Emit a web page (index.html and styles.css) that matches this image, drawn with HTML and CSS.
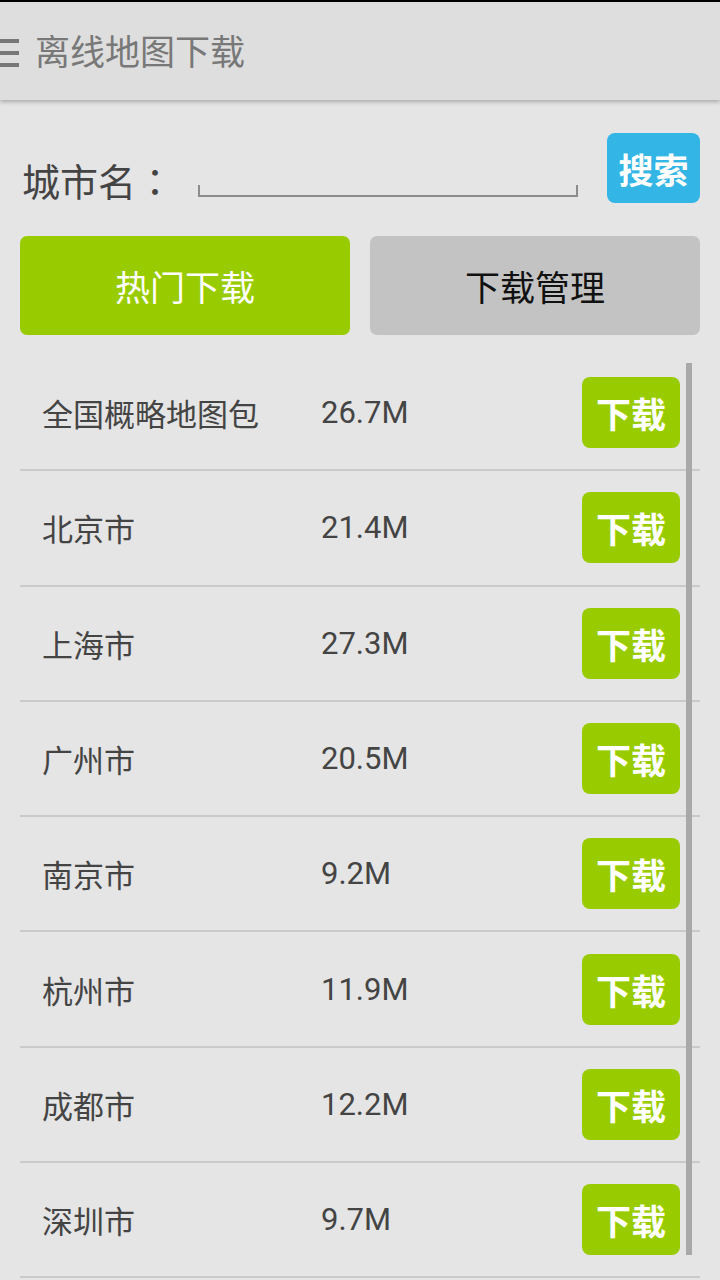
FILE: index.html
```html
<!DOCTYPE html>
<html lang="zh-CN">
  <head>
    <meta charset="UTF-8" />
    <meta name="viewport" content="width=device-width, initial-scale=1.0" />
    <title>离线地图下载</title>
    <link rel="stylesheet" href="styles.css">
  </head>
  <body>
    <div class="status"></div>
    <div class="header">
      <div class="menu-icon">
        <span></span>
        <span></span>
        <span></span>
      </div>
      <h1 class="title">离线地图下载</h1>
    </div>

    <div class="search-row">
      <label class="label" for="city">城市名<span class="colon" lang="zh-Hant">：</span></label>
      <div class="input"></div>
      <button class="search-btn">搜索</button>
    </div>

    <div class="tabs">
      <button class="tab tab-active">热门下载</button>
      <button class="tab">下载管理</button>
    </div>

    <div class="list-wrap">
      <ul class="list">
        <li class="row"><span class="name">全国概略地图包</span><span class="size">26.7M</span><button class="dl-btn">下载</button></li>
        <li class="row"><span class="name">北京市</span><span class="size">21.4M</span><button class="dl-btn">下载</button></li>
        <li class="row"><span class="name">上海市</span><span class="size">27.3M</span><button class="dl-btn">下载</button></li>
        <li class="row"><span class="name">广州市</span><span class="size">20.5M</span><button class="dl-btn">下载</button></li>
        <li class="row"><span class="name">南京市</span><span class="size">9.2M</span><button class="dl-btn">下载</button></li>
        <li class="row"><span class="name">杭州市</span><span class="size">11.9M</span><button class="dl-btn">下载</button></li>
        <li class="row"><span class="name">成都市</span><span class="size">12.2M</span><button class="dl-btn">下载</button></li>
        <li class="row"><span class="name">深圳市</span><span class="size">9.7M</span><button class="dl-btn">下载</button></li>
      </ul>
      <div class="scrollbar"></div>
    </div>
  </body>
</html>
```

FILE: styles.css
```css
/* Offline map download screen */
body {
  font-family: Roboto, "Noto Sans CJK SC", sans-serif;
  margin: 0;
  width: 720px;
  height: 1280px;
  overflow: hidden;
  background-color: #e5e5e5;
  color: #444;
}
.status {
  height: 2px;
  background-color: #000;
}
.header {
  height: 98px;
  box-sizing: border-box;
  padding-top: 4px;
  display: flex;
  align-items: center;
  background-color: #dedede;
  box-shadow: 0 2px 4px rgba(0, 0, 0, 0.25);
  position: relative;
}
.menu-icon {
  width: 19px;
  display: flex;
  flex-direction: column;
  gap: 8px;
  margin-right: 16px;
}
.menu-icon span {
  display: block;
  height: 4px;
  background-color: #777;
}
.title {
  margin: 0;
  font-size: 35px;
  font-weight: normal;
  color: #787878;
  line-height: 1;
}
.search-row {
  display: flex;
  align-items: flex-start;
  padding: 33px 20px 0 22px;
}
.label {
  font-size: 38px;
  line-height: 40px;
  margin-top: 27px;
  color: #444;
}
.colon {
  font-family: "Noto Sans CJK TC", sans-serif;
}
.input {
  width: 376px;
  height: 10px;
  margin-top: 52px;
  margin-left: 24px;
  border: 2px solid #8c8c8c;
  border-top: none;
}
.search-btn {
  margin-left: auto;
  width: 93px;
  height: 70px;
  border: none;
  border-radius: 8px;
  background-color: #33b5e5;
  color: #fff;
  font-family: inherit;
  font-size: 35px;
  font-weight: bold;
  padding: 0;
}
.tabs {
  display: flex;
  gap: 20px;
  padding: 0 20px;
  margin-top: 33px;
}
.tab {
  flex: 1;
  height: 99px;
  border: none;
  border-radius: 7px;
  background-color: #c3c3c3;
  color: #111;
  font-family: inherit;
  font-size: 35px;
  padding: 0;
}
.tab-active {
  background-color: #99cc00;
  color: #fff;
}
.list-wrap {
  position: relative;
  margin-top: 21px;
}
.list {
  list-style: none;
  margin: 0 20px;
  padding: 0;
}
.row {
  height: 113.3px;
  border-bottom: 2px solid #cacaca;
  display: flex;
  align-items: center;
  padding: 0 20px 0 22px;
}
.name {
  width: 279px;
  font-size: 31px;
}
.size {
  font-size: 31px;
}
.dl-btn {
  margin-left: auto;
  width: 98px;
  height: 71px;
  border: none;
  border-radius: 8px;
  background-color: #99cc00;
  color: #fff;
  font-family: inherit;
  font-size: 35px;
  font-weight: bold;
  padding: 0;
}
.scrollbar {
  position: absolute;
  left: 686px;
  top: 7px;
  width: 6px;
  height: 892px;
  background-color: #a9a9a9;
}
```
